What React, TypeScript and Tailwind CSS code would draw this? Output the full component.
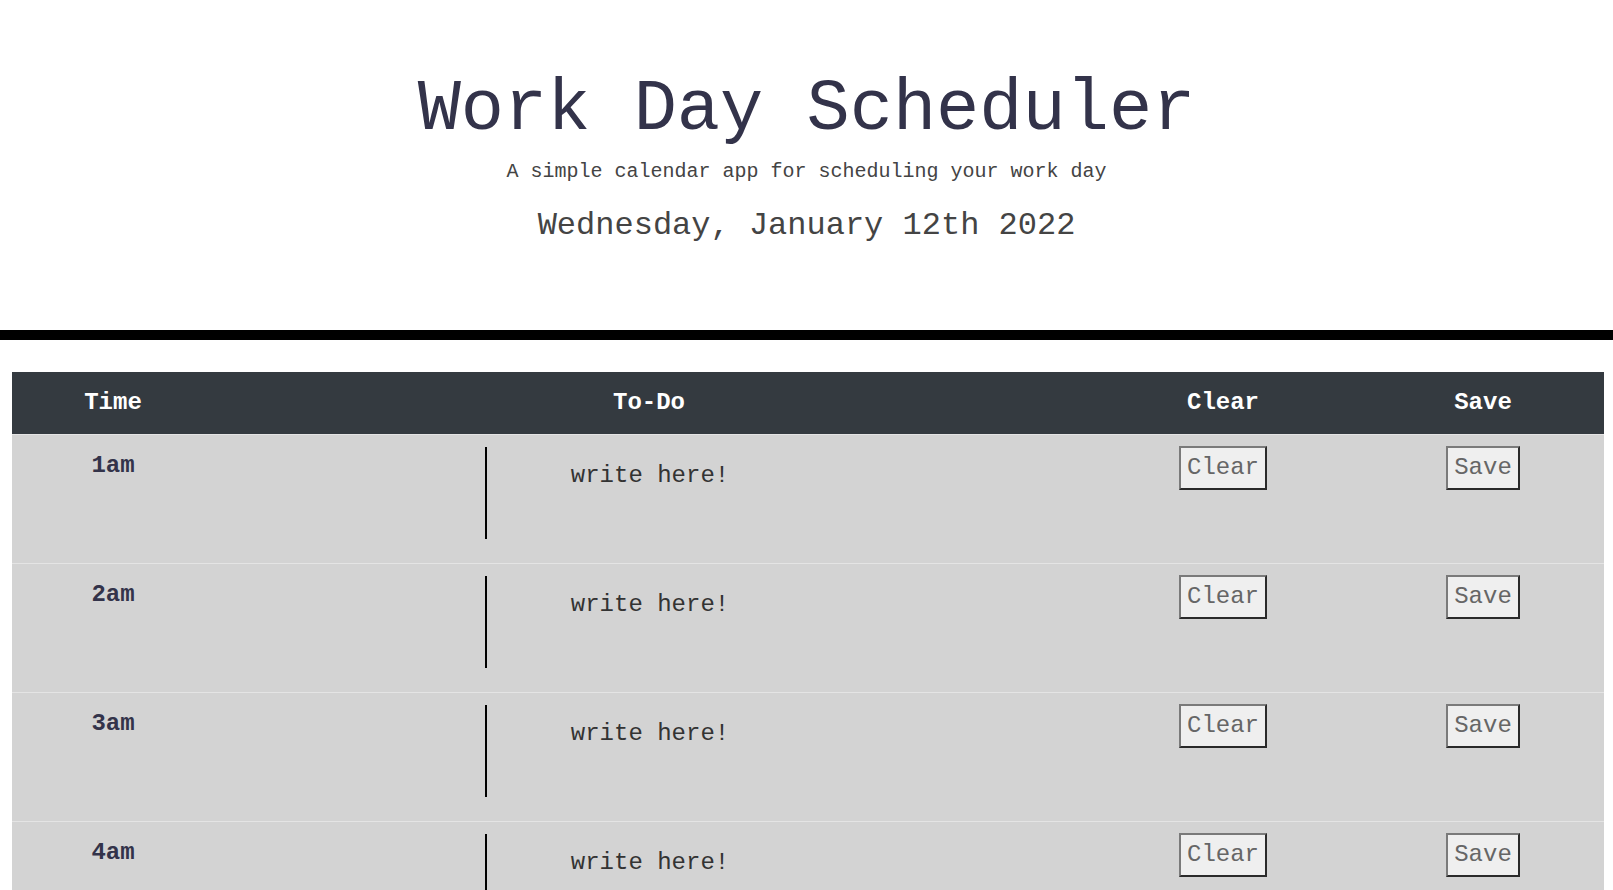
import { FC } from 'react';

const hours = ['1am', '2am', '3am', '4am', '5am', '6am', '7am', '8am', '9am', '10am', '11am', '12pm'];

const mono = { fontFamily: '"Liberation Mono", "Courier New", monospace' };

const Row: FC<{ hour: string }> = ({ hour }) => (
  <div className="grid grid-cols-[202px_870px_278px_242px] h-[129px] bg-[#d3d3d3] border-t border-[#e4e4e4] first:border-t-[#454d55]">
    <div className="pt-[13px] text-center text-[24px] leading-[36px] font-bold text-[#33334a]">{hour}</div>
    <div className="pt-[12px]">
      <textarea
        defaultValue=""
        placeholder="write here!"
        className="ml-[271px] w-[328px] h-[92px] resize-none bg-transparent border-0 border-l-2 border-black pt-[11px] text-center text-[24px] leading-[36px] text-[#333] placeholder:text-[#333] outline-none"
        style={mono}
      />
    </div>
    <div className="pt-[11px] flex justify-center">
      <button className="h-[44px] px-[6px] bg-[#efefef] border-2 border-t-[#7a7a7a] border-l-[#7a7a7a] border-r-[#2a2a2a] border-b-[#2a2a2a] text-[24px] leading-[30px] text-[#666]">
        Clear
      </button>
    </div>
    <div className="pt-[11px] flex justify-center">
      <button className="h-[44px] px-[6px] bg-[#efefef] border-2 border-t-[#7a7a7a] border-l-[#7a7a7a] border-r-[#2a2a2a] border-b-[#2a2a2a] text-[24px] leading-[30px] text-[#666]">
        Save
      </button>
    </div>
  </div>
);

const App: FC = () => {
  return (
    <div className="min-h-screen bg-white" style={mono}>
      {/* Header */}
      <header className="pt-[67px] h-[340px] text-center border-b-[10px] border-black">
        <h1 className="text-[72px] leading-[1.2] font-light text-[#33334a] mb-[4px]">Work Day Scheduler</h1>
        <p className="text-[20px] leading-[30px] text-[#444] mb-[15px]">A simple calendar app for scheduling your work day</p>
        <p className="text-[32px] leading-[48px] text-[#444]">Wednesday, January 12th 2022</p>
      </header>

      {/* Schedule table */}
      <div className="mt-[32px] ml-[12px] w-[1592px]">
        <div className="grid grid-cols-[202px_870px_278px_242px] h-[62px] items-center bg-[#343a40] text-white text-[24px] font-bold text-center">
          <span>Time</span>
          <span>To-Do</span>
          <span>Clear</span>
          <span>Save</span>
        </div>
        {hours.map((h) => (
          <Row key={h} hour={h} />
        ))}
      </div>
    </div>
  );
};

export default App;
